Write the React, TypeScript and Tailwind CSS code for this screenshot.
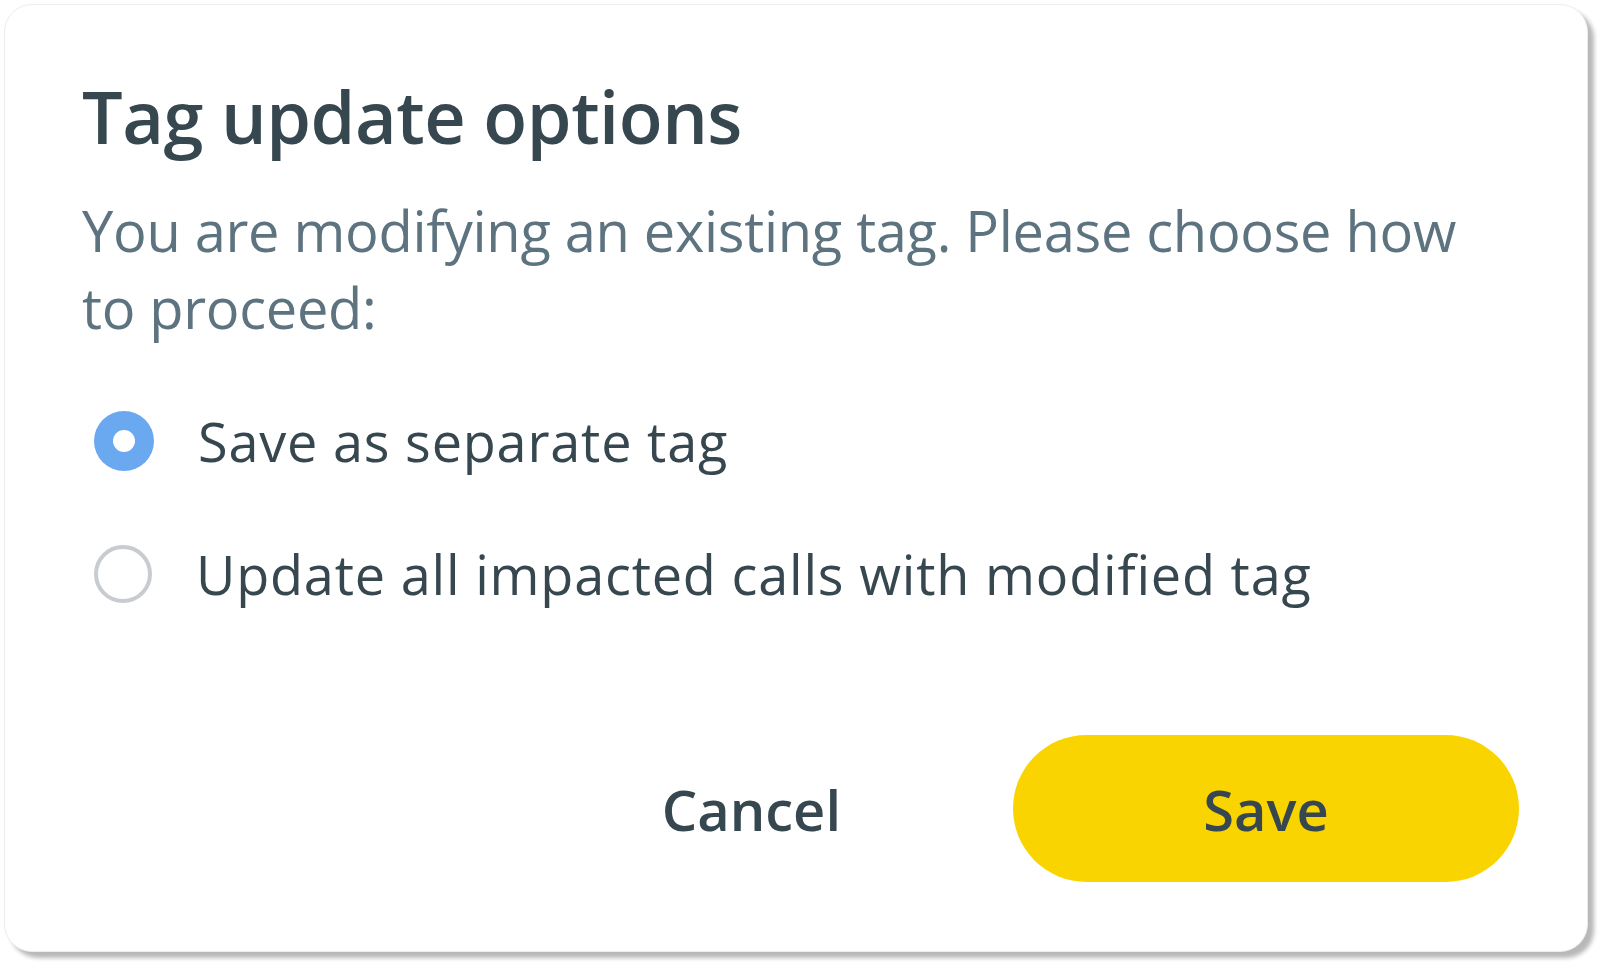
import { useState } from "react";

type Choice = "separate" | "update";

const options: { id: Choice; label: string }[] = [
  { id: "separate", label: "Save as separate tag" },
  { id: "update", label: "Update all impacted calls with modified tag" },
];

export default function App() {
  const [choice, setChoice] = useState<Choice>("separate");

  return (
    <div className="w-[1600px] h-[965px] bg-white p-[4px] font-['Open_Sans',sans-serif]">
      <div className="w-[1584px] h-[948px] rounded-[28px] bg-white border border-[#ececec] shadow-[6px_6px_4px_rgba(0,0,0,0.28)] pl-[77px] pr-[50px] pt-[66px] flex flex-col">
        {/* Title */}
        <h1 className="text-[72px] leading-[90px] font-semibold text-[#37474f] tracking-[-0.5px]">
          Tag update options
        </h1>

        {/* Description */}
        <p className="mt-[31px] max-w-[1410px] text-[56px] leading-[77px] text-[#5d7480] tracking-[-0.3px]">
          You are modifying an existing tag. Please choose how to proceed:
        </p>

        {/* Radios */}
        <div className="mt-[65px] flex flex-col gap-[73px] pl-[12px]">
          {options.map((o) => {
            const on = choice === o.id;
            return (
              <label key={o.id} className="flex items-center gap-[44px] cursor-pointer" onClick={() => setChoice(o.id)}>
                {on ? (
                  <span className="w-[60px] h-[60px] rounded-full bg-[#6aa8f0] flex items-center justify-center shrink-0">
                    <span className="w-[22px] h-[22px] rounded-full bg-white" />
                  </span>
                ) : (
                  <span className="w-[58px] h-[58px] rounded-full border-[4px] border-[#c8ccd0] shrink-0" />
                )}
                <span className="text-[54px] leading-[60px] text-[#37474f] tracking-[0.8px]">{o.label}</span>
              </label>
            );
          })}
        </div>

        {/* Actions */}
        <div className="mt-auto mb-[69px] mr-[18px] flex items-center justify-end gap-[172px]">
          <button className="text-[56px] font-semibold text-[#37474f]">Cancel</button>
          <button className="w-[506px] h-[147px] rounded-full bg-[#f9d401] text-[56px] font-semibold text-[#37474f]">
            Save
          </button>
        </div>
      </div>
    </div>
  );
}
